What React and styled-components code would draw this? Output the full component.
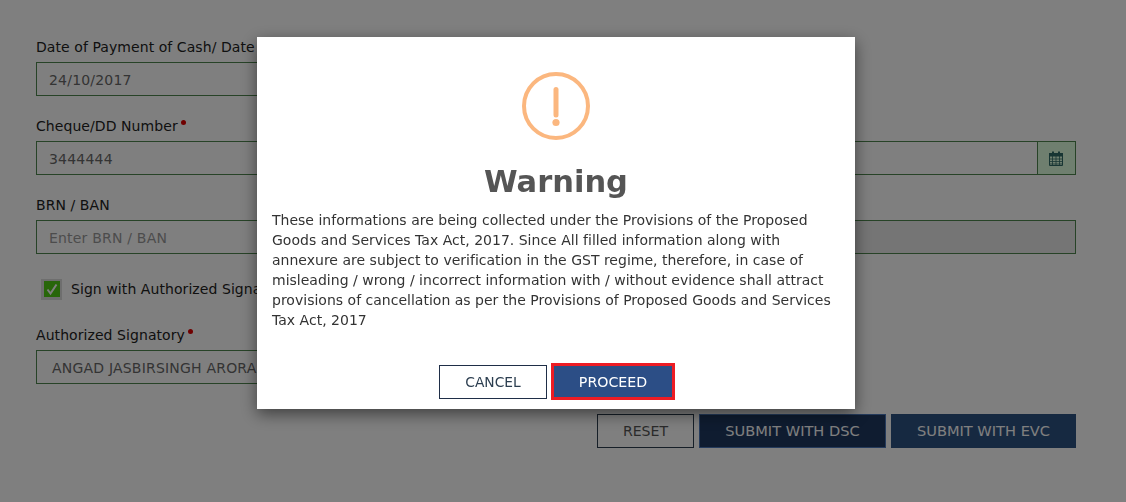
import styled, { createGlobalStyle } from "styled-components";

const GlobalStyle = createGlobalStyle`
    html, body {
        margin: 0;
        padding: 0;
        background: #FFFFFF;
        font-family: "DejaVu Sans", Verdana, sans-serif;
    }
    * {
        box-sizing: border-box;
    }
`;

const message = `These informations are being collected under the Provisions of the Proposed Goods and Services Tax Act, 2017. Since All filled information along with annexure are subject to verification in the GST regime, therefore, in case of misleading / wrong / incorrect information with / without evidence shall attract provisions of cancellation as per the Provisions of Proposed Goods and Services Tax Act, 2017`;

function CalendarIcon() {
    return (
        <svg width="14" height="15" viewBox="0 0 14 15" fill="none">
            <path d="M0.5 3.5h13v11h-13z" stroke="#2f6b66" />
            <path d="M0 2h14v3.5H0z" fill="#2f6b66" />
            <path d="M3 0.5h2v3H3zM9 0.5h2v3H9z" fill="#2f6b66" />
            <path d="M0 8h14M0 10.5h14M0 13h14M3.5 5v9M7 5v9M10.5 5v9" stroke="#2f6b66" strokeWidth="0.8" />
        </svg>
    );
}

function WarningIcon() {
    return (
        <svg width="68" height="68" viewBox="0 0 68 68" fill="none">
            <circle cx="34" cy="34" r="32" stroke="#FBB77F" strokeWidth="4" />
            <line x1="34" y1="17.5" x2="34" y2="43" stroke="#FBB77F" strokeWidth="5" strokeLinecap="round" />
            <circle cx="34" cy="50.5" r="3.6" fill="#FBB77F" />
        </svg>
    );
}

export default function App() {
    return (
        <>
            <GlobalStyle />
            <Page>
                <FormGrid>
                    <Field>
                        <Label>Date of Payment of Cash/ Date of Cheque</Label>
                        <InputBox>24/10/2017</InputBox>
                    </Field>
                    <Field />
                    <Field>
                        <Label>Cheque/DD Number<Required /></Label>
                        <InputBox>3444444</InputBox>
                    </Field>
                    <Field>
                        <Label>&nbsp;</Label>
                        <InputBox>
                            <Addon><CalendarIcon /></Addon>
                        </InputBox>
                    </Field>
                    <Field>
                        <Label>BRN / BAN</Label>
                        <InputBox $placeholder>Enter BRN / BAN</InputBox>
                    </Field>
                    <Field>
                        <Label>&nbsp;</Label>
                        <InputBox $disabled />
                    </Field>
                </FormGrid>
                <CheckRow>
                    <CheckFrame>
                        <CheckBox>
                            <svg width="14" height="14" viewBox="0 0 14 14" fill="none">
                                <path d="M2.5 7.5 5.5 11.5 11.5 2.5" stroke="#FFFFFF" strokeWidth="2" />
                            </svg>
                        </CheckBox>
                    </CheckFrame>
                    <CheckLabel>Sign with Authorized Signatory</CheckLabel>
                </CheckRow>
                <SignatoryField>
                    <Label>Authorized Signatory<Required /></Label>
                    <InputBox $select>ANGAD JASBIRSINGH ARORA</InputBox>
                </SignatoryField>
                <Actions>
                    <OutlineButton>RESET</OutlineButton>
                    <SolidButton $wide $focused>SUBMIT WITH DSC</SolidButton>
                    <SolidButton>SUBMIT WITH EVC</SolidButton>
                </Actions>
            </Page>
            <Overlay>
                <Modal>
                    <IconWrap><WarningIcon /></IconWrap>
                    <Title>Warning</Title>
                    <Message>{message}</Message>
                    <ModalActions>
                        <CancelButton>CANCEL</CancelButton>
                        <ProceedButton>PROCEED</ProceedButton>
                    </ModalActions>
                </Modal>
            </Overlay>
        </>
    );
}

const Page = styled.div`
    width: 1126px;
    height: 502px;
    padding: 38px 50px 0 36px;
    overflow: hidden;
    color: #222222;
    font-size: 14px;
`

const FormGrid = styled.div`
    display: grid;
    grid-template-columns: 505px 505px;
    column-gap: 30px;
    row-gap: 21px;
`

const Field = styled.div`
    display: flex;
    flex-direction: column;
    min-height: 58px;
`

const SignatoryField = styled(Field)`
    width: 505px;
    margin-top: 25px;
`

const Label = styled.label`
    height: 24px;
    line-height: 18px;
    font-size: 14px;
    letter-spacing: 0.07px;
    white-space: nowrap;
    color: #222222;
`

const Required = styled.span`
    display: inline-block;
    width: 5px;
    height: 5px;
    margin: 0 0 6px 3px;
    border-radius: 50%;
    background: #E00000;
`

const InputBox = styled.div`
    position: relative;
    height: 34px;
    line-height: 34px;
    padding-left: ${props => (props.$select ? "15px" : "12px")};
    font-size: 14px;
    letter-spacing: 0.2px;
    color: ${props => (props.$placeholder ? "#999999" : "#686868")};
    background: ${props => (props.$disabled ? "#EBEBEB" : "#FFFFFF")};
    border: 1px solid #4E864E;
    white-space: nowrap;
`

const Addon = styled.span`
    position: absolute;
    top: 0;
    right: 0;
    bottom: 0;
    width: 38px;
    padding-right: 1px;
    display: flex;
    align-items: center;
    justify-content: center;
    background: #DFFFDF;
    border-left: 1px solid #4E864E;
`

const CheckRow = styled.div`
    display: flex;
    align-items: center;
    gap: 9px;
    margin-top: 23px;
    padding-left: 5px;
    height: 24px;
`

const CheckFrame = styled.span`
    display: flex;
    align-items: center;
    justify-content: center;
    width: 21px;
    height: 21px;
    background: #DDDDDD;
`

const CheckBox = styled.span`
    display: flex;
    align-items: center;
    justify-content: center;
    width: 16px;
    height: 16px;
    background: #50CC14;
`

const CheckLabel = styled.span`
    font-size: 14px;
    letter-spacing: 0.07px;
    color: #222222;
    white-space: nowrap;
`

const Actions = styled.div`
    display: flex;
    justify-content: flex-end;
    gap: 5px;
    margin-top: 30px;
`

const OutlineButton = styled.button`
    width: 97px;
    height: 34px;
    padding: 0 0 1px;
    font-family: inherit;
    font-size: 14.1px;
    color: #555555;
    background: #FFFFFF;
    border: 1px solid #2C3E50;
`

const SolidButton = styled.button`
    width: ${props => (props.$wide ? "187px" : "185px")};
    height: 34px;
    padding: 0 0 1px;
    font-family: inherit;
    font-size: 14.6px;
    color: #FFFFFF;
    background: ${props => (props.$focused ? "#1E3860" : "#2C5282")};
    border: 1px solid ${props => (props.$focused ? "#4A76B8" : "#2C5282")};
`

const Overlay = styled.div`
    position: fixed;
    inset: 0;
    padding: 37px 0 0 257px;
    background: rgba(0, 0, 0, 0.5);
`

const Modal = styled.div`
    width: 598px;
    height: 372px;
    padding: 35px 15px 0;
    display: flex;
    flex-direction: column;
    background: #FFFFFF;
    box-shadow: 0 5px 15px rgba(0, 0, 0, 0.5);
`

const IconWrap = styled.div`
    display: flex;
    justify-content: center;
    height: 68px;
`

const Title = styled.h2`
    margin: 24px 0 0;
    height: 36px;
    line-height: 36px;
    text-align: center;
    font-size: 30.5px;
    font-weight: bold;
    color: #555555;
`

const Message = styled.p`
    margin: 10px 0 0;
    font-size: 14px;
    letter-spacing: 0.01px;
    line-height: 20px;
    color: #333333;
`

const ModalActions = styled.div`
    display: flex;
    justify-content: center;
    align-items: center;
    gap: 4px;
    margin-top: 33px;
    padding-left: 2px;
`

const CancelButton = styled.button`
    width: 108px;
    height: 34px;
    padding: 0;
    font-family: inherit;
    font-size: 13.8px;
    color: #2C3E50;
    background: #FFFFFF;
    border: 1px solid #1F2E47;
`

const ProceedButton = styled.button`
    width: 124px;
    height: 37px;
    padding: 0;
    font-family: inherit;
    font-size: 14.2px;
    color: #FFFFFF;
    background: #2C4E86;
    border: 3px solid #ED1C24;
`
